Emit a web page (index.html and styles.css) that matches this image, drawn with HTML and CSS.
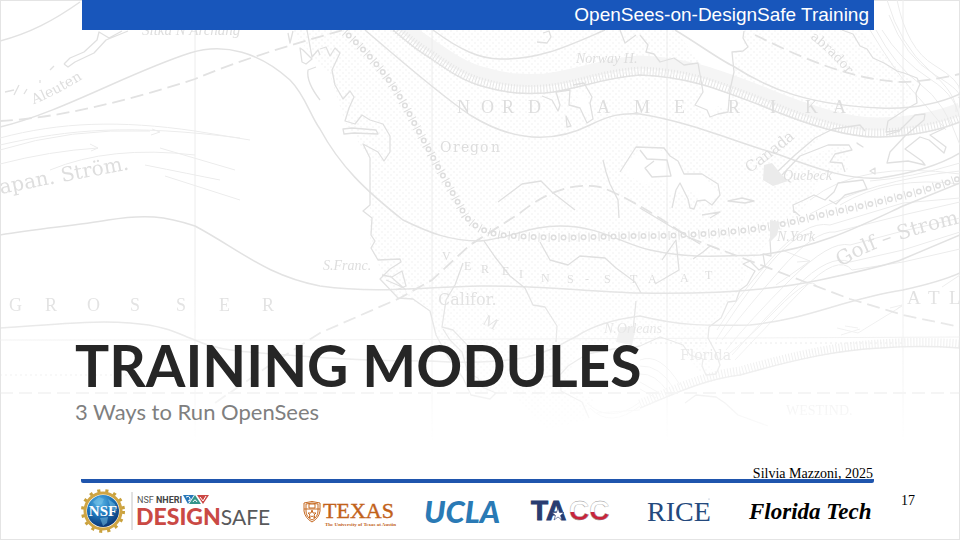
FILE: index.html
```html
<!DOCTYPE html>
<html lang="en">
<head>
<meta charset="utf-8">
<title>Training Modules</title>
<link rel="stylesheet" href="styles.css">
</head>
<body>
<div class="slide">
  <svg class="map" viewBox="0 0 960 540" preserveAspectRatio="xMidYMin slice" aria-hidden="true">
    <defs>
      <linearGradient id="fade" x1="0" y1="0" x2="0" y2="1">
        <stop offset="0" stop-color="#fff"/>
        <stop offset=".5" stop-color="#fff"/>
        <stop offset=".72" stop-color="#777"/>
        <stop offset=".82" stop-color="#000"/>
      </linearGradient>
      <mask id="fadeMask" maskUnits="userSpaceOnUse" x="0" y="0" width="960" height="540"><rect width="960" height="540" fill="url(#fade)"/></mask>
      <pattern id="dots" width="6" height="6" patternUnits="userSpaceOnUse">
        <circle cx="1" cy="1" r=".7" class="dot"/><circle cx="4" cy="4" r=".7" class="dot"/>
      </pattern>
      <path id="rail" d="M345 32Q370 55 385 75T410 115L437 165 465 215Q475 230 500 235C560 240 600 236 640 236C700 236 760 231 800 220C850 208 910 197 960 178"/>
      <path id="band" d="M393 30Q415 49 430 58C450 72 465 82 485 87C510 94 525 94 545 93C580 89 600 78 640 75C690 77 720 90 760 105C800 122 845 138 880 137S940 130 960 122"/>
      <path id="bank" d="M640 408C670 396 700 380 740 375C800 358 840 350 880 348Q920 345 960 348"/>
      <path id="curAl" d="M34 104Q60 94 96 70"/>
      <path id="curJa" d="M1 194Q60 182 154 165"/>
      <path id="curLa" d="M810 38Q845 65 868 104"/>
      <path id="curCa" d="M750 173Q778 153 816 120"/>
      <path id="curGo" d="M841 267Q880 240 984 218"/>
    </defs>
    <g mask="url(#fadeMask)">
      <path fill="url(#dots)" d="M290 30H860L905 72 915 85 905 108 890 150 860 165 820 180 800 215 770 240 750 262 740 290 710 325 708 350 712 370 700 372 672 338 620 345 580 345 565 385 595 400 585 420 545 430 525 410 515 393 480 392 455 362 437 338 430 308 395 295 383 275 370 245 370 160 345 122 330 75Z"/>
      <g class="open">
        <path d="M545 92L558 101 552 110 560 112 555 98M568 92L580 98 575 105 590 115 588 124 593 120 585 92ZM700 62L703 92 695 105 710 117 718 106 731 110 735 60 733 52 745 50 742 30 675 30ZM622 172L640 148 660 150 673 159 685 174 702 174 720 195 705 205 690 190 672 194 660 178 645 185ZM780 178L800 160 840 145 850 152 845 165 880 178 890 160 905 135 900 125 835 125Z"/>
      </g>
      <use href="#band" class="haze" transform="translate(0 -13)"/>
      <use href="#band" class="hatch" transform="translate(0 -4)"/>
      <use href="#bank" class="hatch" transform="translate(0 -4)"/>
      <g class="thin">
        <path d="M195 30V440M432 30V440M667 30V440M903 0V440M0 340H320L960 337"/>
        <path d="M0 138C60 122 120 120 195 131L250 140M0 164Q50 151 98 148L90 144M98 148L91 151M0 150Q70 128 150 131M152 129L160 132 151 135M0 145C70 129 130 124 240 138M50 170Q110 145 195 155M160 148L235 170M165 176L240 200M145 165Q190 174 220 180"/>
        <path d="M876 30Q895 66 920 84T960 145M882 30Q900 60 930 79T960 125M889 15Q905 57 935 75T958 98M897 0Q907 49 934 65T960 92M870 30Q894 70 912 90T946 130M887 0Q900 45 929 70T956 112"/>
        <path d="M717 330Q735 300 770 260T830 225L903 203 960 198M722 340Q745 310 780 270T835 232L903 215 960 202M726 350Q750 320 790 280T850 245L903 231 960 218M732 355Q760 323 795 288T850 262L903 250 960 232M716 340Q736 307 765 270T813 233M735 360Q766 327 802 290T852 270L903 262 960 249M718 362Q740 347 776 310T817 287M782 250L810 261 776 285M797 262L810 261 800 270M840 205Q890 175 960 184M810 200Q860 160 960 174M870 181Q910 178 960 163M810 214Q870 180 960 171"/>
        <path d="M640 360Q660 352 680 385M640 366Q660 365 674 389M640 374Q655 373 668 392M640 382L661 394M640 389L656 398M587 403Q610 425 640 402M590 408Q610 429 640 406M597 413L640 410M837 328L858 333 902 306M841 335L860 329M845 326L858 328M890 308L902 305 896 310M942 287L960 275"/>
      </g>
      <g class="line">
        <path d="M0 41C30 33 53 21 80 2"/>
        <path d="M0 127C60 113 130 72 190 53C225 42 260 53 290 80C305 95 310 115 320 129C340 166 365 190 403 220C430 233 450 241 480 241C515 237 530 226 560 226C600 226 620 243 650 250C690 259 720 256 760 255C820 247 860 226 903 206L960 183"/>
        <path d="M0 235C40 228 75 226 108 220C145 214 165 216 195 226C240 250 265 275 320 286C380 294 420 287 480 286S590 292 640 293Q750 295 820 280T903 259L960 235"/>
        <path d="M0 328C50 325 90 320 130 323C170 326 180 335 195 340C215 350 240 352 300 356Q360 361 430 361C530 367 550 350 577 336Q600 321 640 316C680 326 710 326 750 325C810 319 840 300 903 290Q940 282 960 273"/>
        <path d="M433 30C460 50 480 59 500 59C540 60 570 45 605 30M675 30C700 45 720 60 733 66C770 90 810 105 880 108Q925 110 960 94"/>
        <path d="M365 30C400 60 440 95 470 115C510 140 550 145 590 125C610 115 620 113 640 114C690 122 730 140 780 155C820 170 850 180 880 178Q930 171 960 153"/>
        <use href="#band"/><use href="#bank"/>
      </g>
      <path class="dash" d="M0 121C60 118 130 100 195 79C240 60 290 45 350 28"/>
      <path class="dash" d="M215 403L270 365 320 333 400 298 432 280 470 245 520 213C550 189 575 183 600 187Q630 197 690 238L740 257 800 280 850 299 903 315 960 327"/>
      <path class="dash" d="M755 35C800 57 850 80 903 82Q930 81 960 74"/>
      <path class="dash faint" d="M0 393H960"/>
      <path class="spots" d="M0 375H140M640 343H903"/>
      <use href="#rail" class="ties"/><use href="#rail" class="beads"/><use href="#rail" class="holes"/>
      <g class="coast">
        <path d="M64 64L70 58 84 52 97 40 99 32 109 38 122 31M64 64L68 67 75 62 94 53 106 40 128 31M50 70L54 66M5 92L14 90M19 85L14 95M24 94L27 89M40 83V80"/>
        <path d="M288 33L290 43 293 31M307 30L312 57 318 50 320 55M300 48L302 62 306 64 312 59 303 50ZM320 100Q306 82 308 70L316 67"/>
        <path d="M320 49L326 47 330 56 335 48 340 53 332 70 335 85 343 99 350 91 354 97 349 108 345 121 355 124 362 115 370 120 383 124 390 136 390 152 384 161 378 152 363 144 370 158 370 205 363 211 372 218 371 235 375 241 371 248 378 260 400 259 401 262 390 269 380 279 398 298 413 299 430 311 436 335 448 357 463 378 471 395 490 399 496 393 482 387 478 378 468 373 462 352 450 340 443 329"/>
        <path d="M343 129L352 128 376 130 378 134 354 133 344 134ZM382 275L392 277 402 271 406 286 396 290M386 280L402 287M390 276L406 290"/>
        <path d="M543 33L549 31 551 37 547 43 537 42M620 30L625 43 636 35M542 96L552 100 558 111 560 105 556 92 570 90 569 105 580 108 587 123 593 119 590 103 592 97 584 83 573 85M566 116L571 126 567 127Z"/>
        <path d="M640 35L648 45 646 52 654 54 660 62 674 58 684 65 698 63 703 92 695 105 707 110 710 117 718 114 728 112 730 90 734 72 732 52 743 51 748 47 743 38 744 31"/>
        <path d="M842 30L853 34 860 46 867 49 873 58 884 63 897 71 904 73 917 78 920 84 916 93 917 103 908 108 896 116 888 121 886 132 900 130 915 115 925 114 924 120 905 136 890 152 887 163 908 161 925 165 922 161 905 149 920 137 929 140 944 153 946 147 930 135 945 128"/>
        <path d="M620 172L636 147 664 148 670 156 678 161 684 174 702 174 718 184 720 195 712 205 705 200 697 201 694 209 690 208 688 199 680 183 676 190 672 208M640 150L647 159 667 160 671 176 652 177 645 168 654 161M728 201L742 198 754 201 745 203ZM702 215L720 212 710 218"/>
        <path d="M776 173L795 155 815 138 833 129 860 125 865 131M782 175L800 156 828 145 849 145 852 150 835 154 830 162 842 163 845 172M857 143L863 147 858 144ZM870 171L875 168 875 174ZM886 135L900 131M794 213L793 205 804 200 814 195 825 200 834 192 838 183 863 180 867 189 845 195 836 204 829 200M793 210L800 216"/>
        <path d="M775 220L770 240 771 256 763 254 765 266 759 270 750 261 743 264 755 271 747 285 740 290 736 301 728 302 721 318 709 327 708 338 716 353 720 365 716 374 706 375 702 366 703 359 690 355 683 345 672 341 660 337 640 346 630 348 613 349 587 354 568 366 560 375 561 391 582 402 589 418M560 375L544 377 520 386M693 259L703 252 710 246 720 250M640 208L700 244"/>
        <path d="M484 241L495 257 510 276 525 288 533 305 545 307 557 326 556 342M463 263L455 285 446 300 442 327 453 330 470 348M603 160L606 172 610 184 618 200 619 218M498 202L510 193 522 184 541 181 552 192 575 210M540 242L550 260 568 265 580 256 605 258 616 268 635 282 641 293M662 260L676 240 679 270 655 284M636 301L632 340M685 403L696 395 716 397 725 403 738 415 768 426"/>
      </g>
      <path class="smudge" d="M764 165L772 163 781 174 788 181 773 186 763 180ZM770 220L780 222 777 235 770 242ZM620 327L636 327 632 345 616 342Z"/>
      <g class="names">
        <text font-size="15" class="it" x="142" y="35">Sitka N Archang</text>
        <text font-size="14" class="wide"><textPath href="#curAl">Aleuten</textPath></text>
        <text font-size="20" class="wide"><textPath href="#curJa">apan. Ström.</textPath></text>
        <text font-size="14" class="it" x="576" y="63">Norway H.</text>
        <text font-size="18" y="113" x="457 481 502 528 597 634 674 728 770 805 833">NORDAMERIKA</text>
        <text font-size="14" class="wide" y="152" x="440 453 461 470 480 491 501">Oregon</text>
        <text font-size="13" class="wide"><textPath href="#curLa">abrador</textPath></text>
        <text font-size="15" class="wide"><textPath href="#curCa">Canada</textPath></text>
        <text font-size="14" class="it" x="783" y="180">Quebeck</text>
        <text font-size="14" class="it" x="777" y="241">N.York</text>
        <text font-size="20" class="wide"><textPath href="#curGo">Golf – Strom</textPath></text>
        <text font-size="14" class="it" x="323" y="270">S.Franc.</text>
        <text font-size="12" x="442 464 481 502 519 541 567 585 604 630 648 680 705" y="260 270 273 275 278 282 283 283 283 283 283 282 279">VEREINS-STAAT</text>
        <text font-size="16" class="wide" x="438" y="305">Califor.</text>
        <text font-size="16" x="484" y="328" transform="rotate(28 492 322)">M</text>
        <text font-size="14" class="it" x="604" y="333">N.Orleans</text>
        <text font-size="14" class="wide" x="680" y="360">Florida</text>
        <text font-size="18" y="311" x="9 45 87 130 176 219 262">GROSSER</text>
        <text font-size="19" y="304" x="907 928 949">ATL</text>
        <text font-size="14" x="786" y="415">WESTIND.</text>
      </g>
    </g>
  </svg>

  <header class="topbar">OpenSees-on-DesignSafe Training</header>

  <main class="content">
    <h1 class="title">TRAINING MODULES</h1>
    <p class="subtitle">3 Ways to Run OpenSees</p>
  </main>

  <footer class="footer">
    <p class="credit">Silvia Mazzoni, 2025</p>
    <div class="logos">
      <svg class="logo" width="192" height="48" viewBox="0 0 192 48" role="img" aria-label="NSF NHERI DesignSafe">
        <defs>
          <radialGradient id="globe" cx=".4" cy=".25" r=".8"><stop offset="0" stop-color="#5bb8e8"/><stop offset=".5" stop-color="#1c73b8"/><stop offset="1" stop-color="#0b2f6b"/></radialGradient>
        </defs>
        <circle cx="22" cy="23" r="20" class="teeth"/>
        <circle cx="22" cy="23" r="18" class="ring"/>
        <circle cx="22" cy="23" r="16" fill="url(#globe)"/>
        <path class="lands" d="M12 14L18 9 23 11 21 16 16 18ZM27 11L34 16 36 23 30 21ZM19 30L27 29 26 35 22 38Z"/>
        <text x="22" y="28" class="nsf">NSF</text>
        <path class="divider" d="M51 4V42"/>
        <text x="56" y="15" class="nheri">NSF <tspan class="strong">NHERI</tspan></text>
        <path fill="#2878b9" d="M102 7H113L107 16Z"/><path fill="#35958b" d="M108 16L114 7 120 16Z"/><path fill="#cc4744" d="M116 7H128L122 16Z"/>
        <path class="swirl" d="M105 9Q108 7 109 10T107 13M112 14Q114 10 116 14M119 9L122 13 125 8"/>
        <text x="55" y="37" class="design">DESIGN<tspan class="safe">SAFE</tspan></text>
      </svg>
      <svg class="logo" width="91" height="36" viewBox="0 0 91 36" role="img" aria-label="Texas, The University of Texas at Austin">
        <path class="shield" d="M1 9Q9 6 17 9V17Q16 24 9 28Q2 24 1 17ZM1 15H17M3 10Q9 8 15 10V17Q15 23 9 26Q3 23 3 17Z"/>
        <path class="seal" d="M6 10H12V14H6ZM9 16L10 19 13 19 11 21 12 24 9 22 6 24 7 21 5 19 8 19Z"/>
        <text x="20" y="24" class="texas">TEXAS</text>
        <text x="22" y="32" class="austin">The University of Texas at Austin</text>
      </svg>
      <svg class="logo" width="77" height="36" viewBox="0 0 77 36" role="img" aria-label="UCLA"><text x="0" y="29" class="ucla">UCLA</text></svg>
      <svg class="logo" width="86" height="36" viewBox="0 0 86 36" role="img" aria-label="TACC">
        <defs><linearGradient id="flag" x1="0" y1="0" x2="0" y2="36" gradientUnits="userSpaceOnUse"><stop offset=".5" stop-color="#fff"/><stop offset=".5" stop-color="#c8243b"/></linearGradient></defs>
        <text x="0" y="26" class="tacc">TA</text>
        <text x="38" y="26" class="tacc cc">CC</text>
        <path class="star" d="M27 14L28.500 18.500H33L29.500 21.500 31 26 27 23 23 26 24.500 21.500 21 18.500H25.500Z"/>
      </svg>
      <svg class="logo" width="72" height="36" viewBox="0 0 72 36" role="img" aria-label="Rice"><text x="0" y="27" class="rice">RICE</text><circle cx="62" cy="5" r=".6" fill="#8fa2bd"/></svg>
      <svg class="logo" width="122" height="36" viewBox="0 0 122 36" role="img" aria-label="Florida Tech"><text x="0" y="25" class="florida">Florida Tech</text></svg>
    </div>
    <span class="page">17</span>
  </footer>
</div>
</body>
</html>
```
FILE: styles.css
```css
* { box-sizing: border-box; }

body {
  margin: 0;
  background: #fff;
  font-family: Lato, "Open Sans", sans-serif;
}

.slide {
  position: relative;
  display: flex;
  flex-direction: column;
  min-height: 100vh;
  overflow: hidden;
}

.slide::before {
  content: "";
  position: absolute;
  inset: 0;
  border: 1px solid #e4e4e4;
}

.map {
  position: absolute;
  inset: 0;
  width: 100%;
  height: 100%;
}

.topbar,
.content,
.footer { position: relative; }

.topbar {
  margin: 0 86px 0 82px;
  padding-right: 5px;
  background: #1856bb;
  color: #fff;
  font: 19px/30px "Liberation Sans", Arial, sans-serif;
  text-align: right;
}

.content {
  flex: 1;
  display: flex;
  flex-direction: column;
  justify-content: flex-end;
  padding: 0 76px 40px 75px;
}

.title {
  margin: 0;
  color: #262626;
  font-size: 57px;
  font-weight: 700;
  line-height: 60px;
}

.subtitle {
  margin: 0;
  color: #7f7f7f;
  font-size: 22px;
  line-height: 34px;
}

.footer {
  display: grid;
  grid-template-columns: 1fr 86px;
  padding-left: 81px;
  font-family: "Liberation Serif", "Times New Roman", serif;
  font-size: 14px;
  color: #000;
}

.credit {
  margin: 0;
  padding-right: 1px;
  border-bottom: 4px solid #1f55ad;
  border-radius: 2px;
  line-height: 10px;
  text-align: right;
}

.logos {
  grid-row: 2;
  display: flex;
  align-items: center;
  justify-content: space-between;
  height: 57px;
  padding-right: 3px;
}

.logo { flex: none; overflow: visible; }

.page {
  grid-row: 2;
  grid-column: 2;
  padding: 8px 0 0 27px;
  line-height: 20px;
}

/* Map */
.dot { fill: #ebebeb; }
.open { fill: #fff; }
.line, .thin, .coast, .dash, .hatch, .haze, .spots, .ties, .beads, .holes { fill: none; }
.line { stroke: #e2e2e2; stroke-width: 1.5; }
.thin { stroke: #ececec; stroke-width: 1; }
.coast { stroke: #e0e0e0; stroke-width: 1.3; stroke-linejoin: round; }
.dash { stroke: #e2e2e2; stroke-width: 1.8; stroke-dasharray: 13 6; }
.faint { stroke: #e8e8e8; }
.hatch { stroke: #e6e6e6; stroke-width: 9; stroke-dasharray: 1 2; }
.haze { stroke: #f5f5f5; stroke-width: 13; }
.spots { stroke: #e4e4e4; stroke-dasharray: 2 3; }
.ties { stroke: #dedede; stroke-width: 9; stroke-dasharray: 1 9; }
.beads { stroke: #dedede; stroke-width: 6; stroke-linecap: round; stroke-dasharray: 0 10; stroke-dashoffset: -5; }
.holes { stroke: #fff; stroke-width: 3; stroke-linecap: round; stroke-dasharray: 0 10; stroke-dashoffset: -5; }
.smudge { fill: #ebebeb; }
.names { fill: #dedede; font-family: "Liberation Serif", serif; }
.wide { font-family: "DejaVu Serif", serif; }
.it { font-style: italic; }

/* Logos */
.teeth { fill: none; stroke: #c9a13c; stroke-width: 4; stroke-dasharray: 3 5; }
.ring { fill: none; stroke: #cfa544; stroke-width: 3; }
.lands { fill: #7cc4e6; opacity: .5; }
.nsf { fill: #fff; font: 700 15px "Liberation Serif", serif; text-anchor: middle; }
.divider { stroke: #c4c4c4; }
.nheri { fill: #555; font: 9px Roboto, sans-serif; }
.strong { font-weight: 700; fill: #444; }
.swirl { fill: none; stroke: #fff; }
.design { fill: #ca4944; font: 900 23px Lato, sans-serif; }
.safe { fill: #58595b; font-weight: 400; font-size: 21px; }
.shield { fill: none; stroke: #c66a22; }
.seal { fill: none; stroke: #c66a22; }
.texas { fill: #c2621a; font: 22px "Liberation Serif", serif; stroke: #c2621a; stroke-width: .4; }
.austin { fill: #c2621a; font: 700 5px "Liberation Serif", serif; }
.ucla { fill: #2a7ab5; font: italic 900 31px Lato, sans-serif; }
.tacc { fill: #293c70; stroke: #293c70; font: 700 28px "Liberation Sans", sans-serif; }
.cc { fill: url(#flag); stroke: #999; stroke-width: .4; }
.star { fill: #fff; stroke: #293c70; stroke-width: .6; }
.rice { fill: #24497d; font: 28px "Liberation Serif", serif; }
.florida { fill: #000; font: italic 700 23px "Liberation Serif", serif; }
```
